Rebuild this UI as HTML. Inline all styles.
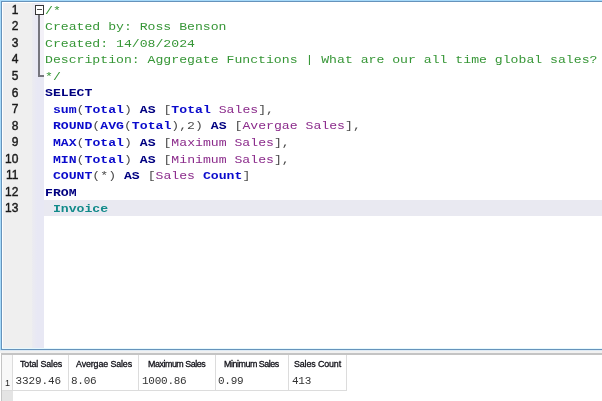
<!DOCTYPE html>
<html><head><meta charset="utf-8">
<style>
*{margin:0;padding:0;box-sizing:border-box}
html,body{width:602px;height:401px;overflow:hidden;background:#fff}
body{position:relative;font-family:"Liberation Sans",sans-serif}
.abs{position:absolute}
#ed{left:0;top:0;width:602px;height:351px;background:#fff}
#bt1{left:0;top:0;width:602px;height:1px;background:#a6dafa}
#bt2{left:1px;top:1px;width:601px;height:1px;background:#6693bb}
#bl1{left:0;top:0;width:1px;height:351px;background:#a6dafa}
#bl2{left:1px;top:1px;width:1px;height:349px;background:#6693bb}
#bb1{left:1px;top:349px;width:601px;height:1px;background:#6693bb}
#bb2{left:0;top:350px;width:602px;height:1px;background:#dde9f3}
#bb0{left:2px;top:348px;width:600px;height:1px;background:#e6f9fe}
#gap{left:0;top:351px;width:602px;height:2px;background:#f1f1f1}
#gut{left:3px;top:3px;width:29px;height:346px;background:#efefef}
#fold{left:32px;top:3px;width:12px;height:346px;background:linear-gradient(90deg,#ececf0,#e8e8f4 40%,#e8e8f4)}
#fold2{left:40px;top:3px;width:4px;height:74px;background:#f3f1f8}
.ln{position:absolute;left:0;width:18.4px;text-align:right;font-size:12px;line-height:16.53px;color:#1a1a1a;-webkit-text-stroke:0.4px #1a1a1a}
.cl{position:absolute;left:45.2px;white-space:pre;font-family:"Liberation Mono",monospace;font-size:11px;letter-spacing:0px;line-height:16.53px;color:#000;transform:scaleX(1.1955);transform-origin:0 0}
.c{color:#369636}
.k{color:#000080;font-weight:bold}
.f{color:#0a0acc;font-weight:bold}
.o{color:#4a4a4a}
.p{color:#8b2b8b}
.t{color:#128a8a;font-weight:bold}
#hl{left:44px;top:200px;width:558px;height:16px;background:#e9e9f1}
#fbox{left:35px;top:5px;width:9px;height:10px;border:1px solid #353535;background:#fff}
#fminus{left:37px;top:9px;width:5px;height:1px;background:#505050}
#fline{left:38px;top:15px;width:2px;height:61px;background:#76767e}
#fend{left:38px;top:75px;width:6px;height:2px;background:#76767e}
#gtop{left:1px;top:353px;width:601px;height:2px;background:#c4c4c4}
#gleft{left:1px;top:353px;width:1px;height:48px;background:#c4c4c4}
#rh{left:2px;top:355px;width:10px;height:36px;background:#f8f8f8}
#rhb{left:2px;top:391px;width:11px;height:10px;background:#e4e4e4}
.vl{position:absolute;top:355px;width:1px;height:36px;background:#dcdcdc}
#rowb{left:2px;top:390px;width:345px;height:1px;background:#dcdcdc}
.hd{position:absolute;top:358px;font-size:8.9px;letter-spacing:-0.12px;line-height:12px;color:#111118;-webkit-text-stroke:0.3px #111118;white-space:nowrap;transform-origin:left top}
.dt{position:absolute;top:375px;font-family:"Liberation Mono",monospace;font-size:11px;letter-spacing:-0.25px;line-height:12px;color:#333;white-space:pre}
#wrap{position:absolute;left:0;top:0;width:602px;height:401px;overflow:hidden;background:#fff;filter:blur(0.25px)}
</style></head><body><div id="wrap">
<div id="ed" class="abs"></div>
<div id="gut" class="abs"></div>
<div id="fold" class="abs"></div><div id="fold2" class="abs"></div>
<div id="hl" class="abs"></div>
<div id="bt1" class="abs"></div><div id="bt2" class="abs"></div>
<div id="bl1" class="abs"></div><div id="bl2" class="abs"></div>
<div id="bb0" class="abs"></div><div id="bb1" class="abs"></div><div id="gap" class="abs"></div><div id="bb2" class="abs"></div>
<div id="fbox" class="abs"></div><div id="fminus" class="abs"></div>
<div id="fline" class="abs"></div><div id="fend" class="abs"></div>
<div class="ln" style="top:1.77px">1</div>
<div class="ln" style="top:18.32px">2</div>
<div class="ln" style="top:34.87px">3</div>
<div class="ln" style="top:51.42px">4</div>
<div class="ln" style="top:67.97px">5</div>
<div class="ln" style="top:84.52px">6</div>
<div class="ln" style="top:101.07px">7</div>
<div class="ln" style="top:117.62px">8</div>
<div class="ln" style="top:134.17px">9</div>
<div class="ln" style="top:150.72px">10</div>
<div class="ln" style="top:167.27px">11</div>
<div class="ln" style="top:183.82px">12</div>
<div class="ln" style="top:200.37px">13</div>
<div class="cl" style="top:2.64px"><span class="c">/*</span></div>
<div class="cl" style="top:19.19px"><span class="c">Created by: Ross Benson</span></div>
<div class="cl" style="top:35.74px"><span class="c">Created: 14/08/2024</span></div>
<div class="cl" style="top:52.29px"><span class="c">Description: Aggregate Functions | What are our all time global sales?</span></div>
<div class="cl" style="top:68.84px"><span class="c">*/</span></div>
<div class="cl" style="top:85.39px"><span class="k">SELECT</span></div>
<div class="cl" style="top:101.94px"> <span class="f">sum</span><span class="o">(</span><span class="f">Total</span><span class="o">)</span> <span class="k">AS</span> <span class="o">[</span><span class="f">Total</span> <span class="p">Sales</span><span class="o">],</span></div>
<div class="cl" style="top:118.49px"> <span class="f">ROUND</span><span class="o">(</span><span class="f">AVG</span><span class="o">(</span><span class="f">Total</span><span class="o">),2)</span> <span class="k">AS</span> <span class="o">[</span><span class="p">Avergae Sales</span><span class="o">],</span></div>
<div class="cl" style="top:135.04px"> <span class="f">MAX</span><span class="o">(</span><span class="f">Total</span><span class="o">)</span> <span class="k">AS</span> <span class="o">[</span><span class="p">Maximum Sales</span><span class="o">],</span></div>
<div class="cl" style="top:151.59px"> <span class="f">MIN</span><span class="o">(</span><span class="f">Total</span><span class="o">)</span> <span class="k">AS</span> <span class="o">[</span><span class="p">Minimum Sales</span><span class="o">],</span></div>
<div class="cl" style="top:168.14px"> <span class="f">COUNT</span><span class="o">(*)</span> <span class="k">AS</span> <span class="o">[</span><span class="p">Sales</span> <span class="f">Count</span><span class="o">]</span></div>
<div class="cl" style="top:184.69px"><span class="k">FROM</span></div>
<div class="cl" style="top:201.24px"> <span class="t">Invoice</span></div>
<div id="gtop" class="abs"></div>
<div id="gleft" class="abs"></div>
<div id="rh" class="abs"></div>
<div id="rhb" class="abs"></div>
<div class="vl" style="left:12px"></div>
<div class="vl" style="left:68px"></div>
<div class="vl" style="left:138px"></div>
<div class="vl" style="left:215px"></div>
<div class="vl" style="left:288px"></div>
<div class="vl" style="left:346px"></div>
<div id="rowb" class="abs"></div>
<div class="hd" style="left:20px">Total Sales</div>
<div class="hd" style="left:76px">Avergae Sales</div>
<div class="hd" style="left:148px;letter-spacing:-0.45px">Maximum Sales</div>
<div class="hd" style="left:224px;letter-spacing:-0.45px">Minimum Sales</div>
<div class="hd" style="left:294px">Sales Count</div>
<div class="dt" style="left:5px;top:376.5px;font-family:'Liberation Sans';font-size:9px;color:#222">1</div>
<div class="dt" style="left:15.5px;letter-spacing:-0.1px">3329.46</div>
<div class="dt" style="left:71px">8.06</div>
<div class="dt" style="left:142px">1000.86</div>
<div class="dt" style="left:218px">0.99</div>
<div class="dt" style="left:292px">413</div>
</div></body></html>
